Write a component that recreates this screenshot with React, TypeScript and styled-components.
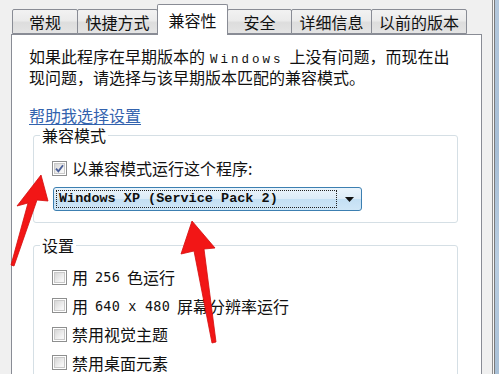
import React from 'react';
import styled, { createGlobalStyle } from 'styled-components';

const GlobalStyle = createGlobalStyle`
   html, body {
      margin: 0;
      padding: 0;
      background: #f0f0f0;
   }
   body {
      font-family: "Noto Sans CJK SC", "Noto Sans", sans-serif;
      color: #111;
   }
`;

const StyledPage = styled.div`
   position: relative;
   width: 499px;
   height: 374px;
   overflow: hidden;
   display: flex;
   background: #f0f0f0;
`;

const StyledDialog = styled.div`
   width: 471px;
   margin-left: 11px;
   padding-top: 5px;
   display: flex;
   flex-direction: column;
   flex-shrink: 0;
`;

const StyledTabRow = styled.div`
   height: 29px;
   padding-left: 1px;
   display: flex;
   align-items: flex-end;
   position: relative;
   z-index: 1;
`;

const StyledTab = styled.div<{ $width: number; $active?: boolean }>`
   box-sizing: border-box;
   width: ${(p) => p.$width}px;
   height: ${(p) => (p.$active ? 31 : 25)}px;
   margin-right: -1px;
   margin-bottom: ${(p) => (p.$active ? -1 : 0)}px;
   display: flex;
   align-items: center;
   justify-content: center;
   padding-bottom: ${(p) => (p.$active ? 1 : 0)}px;
   border: 1px solid #898c95;
   border-bottom: ${(p) => (p.$active ? 'none' : '1px solid #898c95')};
   border-radius: 2px 2px 0 0;
   background: ${(p) => (p.$active ? '#fff' : 'linear-gradient(#f2f2f2, #ebebeb 45%, #dddddd 55%, #e4e4e4)')};
   font-size: 16px;
   line-height: 16px;
   position: relative;
   z-index: ${(p) => (p.$active ? 2 : 1)};
   white-space: nowrap;
`;

const StyledPanel = styled.div`
   flex: 1;
   min-height: 360px;
   background: #fff;
   border: 1px solid #898c95;
   padding: 13px 23px 0 17px;
   font-size: 16px;
   line-height: 16px;
`;

const StyledDescription = styled.p`
   margin: 0;
   line-height: 16.5px;
   white-space: nowrap;
`;

const StyledMonoWord = styled.span`
   font-family: "Liberation Mono", monospace;
   font-size: 12.5px;
   letter-spacing: 3px;
   padding: 0 6px 0 5px;
`;

const StyledHelpLink = styled.a`
   display: block;
   width: max-content;
   margin-top: 22px;
   color: #3363ae;
   text-decoration: underline;
   text-underline-offset: 2px;
   cursor: pointer;
`;

const StyledGroup = styled.fieldset<{ $gap: number }>`
   margin: ${(p) => p.$gap}px 0 0 4px;
   min-width: 0;
   padding: 0 10px 11px 6px;
   border: 1px solid #d5dfe5;
   border-radius: 3px;
`;

const StyledGroupTitle = styled.legend`
   padding: 0 2px;
   font-size: 16px;
   line-height: 16px;
`;

const StyledGroupBody = styled.div<{ $top: number }>`
   padding: ${(p) => p.$top}px 0 0 12px;
   display: flex;
   flex-direction: column;
`;

const StyledOptionRow = styled.label<{ $height: number }>`
   height: ${(p) => p.$height}px;
   display: flex;
   align-items: center;
   gap: 5px;
   white-space: nowrap;
`;

const StyledNumber = styled.span`
   font-family: "DejaVu Sans Mono", monospace;
   font-size: 13.5px;
   letter-spacing: 0.2px;
   padding: 0 2px;
`;

const StyledCheckBox = styled.span`
   box-sizing: border-box;
   width: 15px;
   height: 15px;
   flex-shrink: 0;
   border: 1px solid #8e8f8f;
   background: #fff;
   display: flex;
   align-items: center;
   justify-content: center;
`;

const StyledCheckInner = styled.span`
   box-sizing: border-box;
   width: 11px;
   height: 11px;
   border: 1px solid #c9c9c9;
   background: linear-gradient(135deg, #d6d6d6, #f6f6f6 80%);
   display: flex;
   align-items: center;
   justify-content: center;
`;

const StyledCombo = styled.div`
   box-sizing: border-box;
   width: 309px;
   height: 24px;
   margin: 9px 0 0 1px;
   padding: 2px 0 2px 2px;
   display: flex;
   align-items: stretch;
   border: 1px solid #3c7fb1;
   border-radius: 3px;
   background: linear-gradient(#eaf4fc, #dcebf7 50%, #c4e0f4 52%, #cfe6f7);
`;

const StyledComboText = styled.div`
   flex: 1;
   display: flex;
   align-items: center;
   padding-left: 2px;
   border: 1px dotted #222;
   font-family: "Liberation Mono", monospace;
   font-size: 13.5px;
   font-weight: 700;
   color: #101010;
   white-space: nowrap;
`;

const StyledComboArrow = styled.div`
   width: 24px;
   display: flex;
   align-items: center;
   justify-content: center;
`;

const StyledFrameEdge = styled.div`
   margin-left: 10px;
   width: 1px;
   border-left: 1px solid #8d8d8d;
   border-right: 1px solid #7a7a7a;
   background: #f6f6f6;
   flex-shrink: 0;
`;

const StyledFrameGlass = styled.div`
   flex: 1;
   background: linear-gradient(#b4c8dc, #a7bed5 40%, #b9cde0 70%, #a9c0d6);
`;

const StyledArrowLayer = styled.svg`
   position: absolute;
   left: 0;
   top: 0;
   pointer-events: none;
`;

const tabs = [
   { label: '常规', width: 66 },
   { label: '快捷方式', width: 81 },
   { label: '兼容性', width: 71, active: true },
   { label: '安全', width: 65 },
   { label: '详细信息', width: 81 },
   { label: '以前的版本', width: 96 },
];

const CheckBox: React.FC<{ checked?: boolean }> = ({ checked }) => (
   <StyledCheckBox>
      <StyledCheckInner>
         {checked && (
            <svg width="9" height="9" viewBox="0 0 9 9">
               <path d="M1 4.6 L3.4 7.4 L8 1.2" fill="none" stroke="#4a5f97" strokeWidth="1.8" />
            </svg>
         )}
      </StyledCheckInner>
   </StyledCheckBox>
);

export default function App() {
   return (
      <>
         <GlobalStyle />
         <StyledPage>
            <StyledDialog>
               <StyledTabRow>
                  {tabs.map((tab) => (
                     <StyledTab key={tab.label} $width={tab.width} $active={tab.active}>
                        {tab.label}
                     </StyledTab>
                  ))}
               </StyledTabRow>
               <StyledPanel>
                  <StyledDescription>
                     如果此程序在早期版本的<StyledMonoWord>Windows</StyledMonoWord>上没有问题，而现在出
                     <br />
                     现问题，请选择与该早期版本匹配的兼容模式。
                  </StyledDescription>
                  <StyledHelpLink>帮助我选择设置</StyledHelpLink>

                  <StyledGroup $gap={4}>
                     <StyledGroupTitle>兼容模式</StyledGroupTitle>
                     <StyledGroupBody $top={15}>
                        <StyledOptionRow $height={20}>
                           <CheckBox checked />
                           以兼容模式运行这个程序:
                        </StyledOptionRow>
                        <StyledCombo>
                           <StyledComboText>Windows XP (Service Pack 2)</StyledComboText>
                           <StyledComboArrow>
                              <svg width="9" height="5" viewBox="0 0 9 5">
                                 <path d="M0 0 H9 L4.5 5 Z" fill="#111" />
                              </svg>
                           </StyledComboArrow>
                        </StyledCombo>
                     </StyledGroupBody>
                  </StyledGroup>

                  <StyledGroup $gap={14}>
                     <StyledGroupTitle>设置</StyledGroupTitle>
                     <StyledGroupBody $top={10}>
                        <StyledOptionRow $height={28.5}>
                           <CheckBox />
                           用<StyledNumber> 256 </StyledNumber>色运行
                        </StyledOptionRow>
                        <StyledOptionRow $height={28.5}>
                           <CheckBox />
                           用<StyledNumber> 640 x 480 </StyledNumber>屏幕分辨率运行
                        </StyledOptionRow>
                        <StyledOptionRow $height={28.5}>
                           <CheckBox />
                           禁用视觉主题
                        </StyledOptionRow>
                        <StyledOptionRow $height={28.5}>
                           <CheckBox />
                           禁用桌面元素
                        </StyledOptionRow>
                     </StyledGroupBody>
                  </StyledGroup>
               </StyledPanel>
            </StyledDialog>
            <StyledFrameEdge />
            <StyledFrameGlass />

            {/* red annotation arrows */}
            <StyledArrowLayer width="499" height="374" viewBox="0 0 499 374">
               <polygon points="41,175 48,201 37,200 14,266 11,265 28,203 17,206" fill="#f21616" stroke="#d40c0c" strokeWidth="0.8" strokeLinejoin="round" />
               <polygon points="192,221 215,248 204,249 216,342 212,343 194,251 181,254" fill="#f21616" stroke="#d40c0c" strokeWidth="0.8" strokeLinejoin="round" />
            </StyledArrowLayer>
         </StyledPage>
      </>
   );
}
